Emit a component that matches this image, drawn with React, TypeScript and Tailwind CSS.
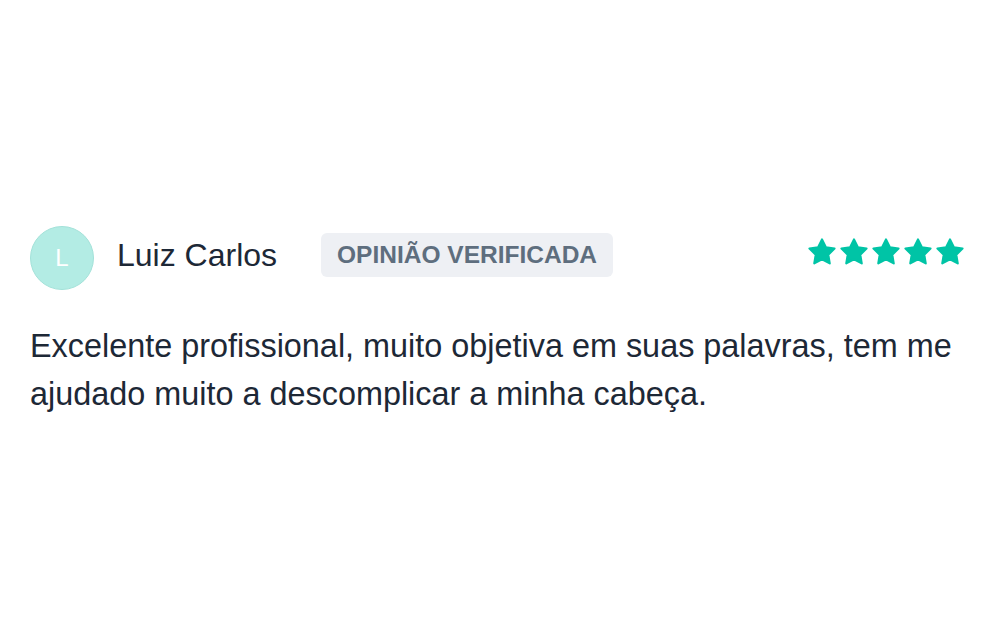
function Star() {
  return (
    <svg width="32" height="32" viewBox="0 0 24 24" className="block">
      <path
        d="M12 2.6l2.9 5.9 6.5.95-4.7 4.6 1.1 6.45L12 17.45 6.2 20.5l1.1-6.45-4.7-4.6 6.5-.95z"
        fill="#00c4a6"
        stroke="#00c4a6"
        strokeWidth="1.6"
        strokeLinejoin="round"
      />
    </svg>
  );
}

export default function App() {
  return (
    <div
      className="h-screen bg-white pt-[226px] px-[30px] text-[#1d2836]"
      style={{ fontFamily: '"Liberation Sans", Arial, sans-serif' }}
    >
      <div className="flex items-start">
        <div className="w-16 h-16 rounded-full bg-[#b3ece4] border border-[#a3e2d9] flex items-center justify-center text-white text-[24px]">
          L
        </div>
        <span className="ml-[23px] mt-[13px] text-[32px] leading-none">Luiz Carlos</span>
        <span className="ml-[44px] mt-[7px] h-11 px-4 rounded-md bg-[#eef0f4] flex items-center text-[24.5px] font-bold text-[#5e6e7e] uppercase">
          Opinião verificada
        </span>
        <div className="ml-auto mr-[-7px] mt-[10px] flex">
          <Star />
          <Star />
          <Star />
          <Star />
          <Star />
        </div>
      </div>
      <p className="mt-[32px] text-[32.4px] leading-[48px]">
        Excelente profissional, muito objetiva em suas palavras, tem me ajudado muito a descomplicar a minha cabeça.
      </p>
    </div>
  );
}
